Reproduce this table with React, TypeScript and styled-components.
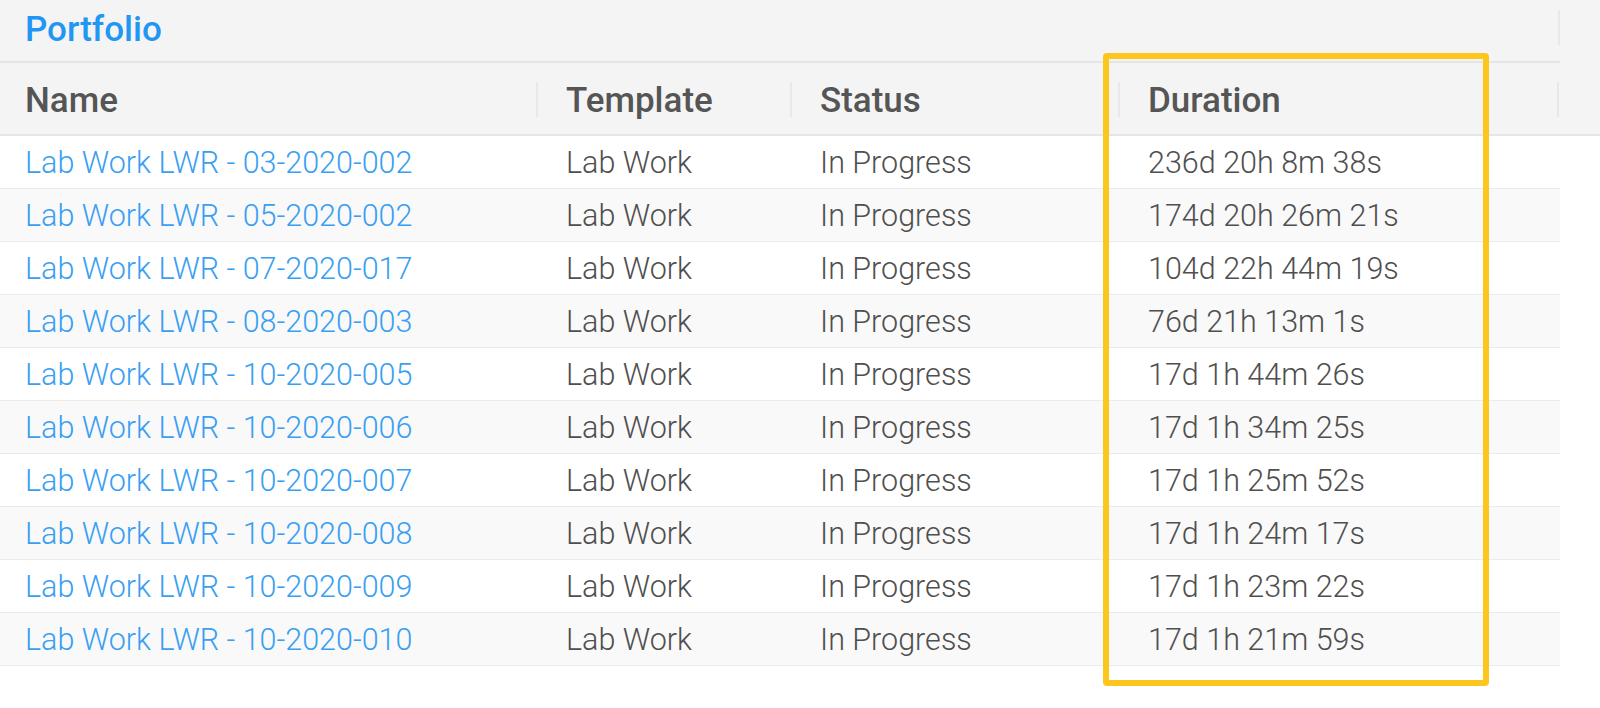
import React from "react";
import styled, { createGlobalStyle } from "styled-components";

const GlobalStyle = createGlobalStyle`
  html, body { margin: 0; padding: 0; background: #ffffff; }
  body { font-family: Roboto, "Noto Sans", Arial, sans-serif; }
`;

const COLS = "538px 254px 328px 439px 1fr";

const Panel = styled.div`
  position: relative;
  width: 1600px;
  height: 708px;
  background: #ffffff;
  overflow: hidden;
`;

const TitleBar = styled.div`
  display: flex;
  background: #f4f4f4;
  height: 63px;
`;

const TitleCell = styled.div`
  flex: 0 0 1560px;
  box-sizing: border-box;
  display: flex;
  align-items: center;
  padding: 0 0 3px 25px;
  border-bottom: 2px solid #e5e5e5;
`;

const Title = styled.h1`
  margin: 0;
  font-size: 35px;
  font-weight: 500;
  color: #2196f3;
`;

const TitleDivider = styled.div`
  width: 2px;
  height: 35px;
  margin-top: 10px;
  margin-left: -2px;
  background: #e8e8e8;
`;

const HeaderRow = styled.div`
  display: grid;
  grid-template-columns: ${COLS};
  height: 73px;
  box-sizing: border-box;
  background: #f4f4f4;
  border-bottom: 2px solid #e6e6e6;
`;

const HeaderCell = styled.div<{ $first?: boolean }>`
  position: relative;
  display: flex;
  align-items: center;
  padding-left: ${(p) => (p.$first ? "25px" : "28px")};
  padding-top: 3px;
  font-size: 35px;
  font-weight: 500;
  color: #555555;
  &::before {
    content: "";
    display: ${(p) => (p.$first ? "none" : "block")};
    position: absolute;
    left: -2px;
    top: 19px;
    width: 2px;
    height: 35px;
    background: #e8e8e8;
  }
`;

const Body = styled.div`
  width: 1560px;
`;

const Row = styled.div<{ $alt: boolean }>`
  display: grid;
  grid-template-columns: 538px 254px 328px 440px;
  height: 53px;
  box-sizing: border-box;
  border-bottom: 1px solid #ebebeb;
  background: ${(p) => (p.$alt ? "#f9f9f9" : "#ffffff")};
`;

const Cell = styled.div<{ $first?: boolean }>`
  display: flex;
  align-items: center;
  padding-left: ${(p) => (p.$first ? "25px" : "28px")};
  font-size: 30.5px;
  font-weight: 300;
  color: #4f4f4f;
  white-space: nowrap;
`;

const NameLink = styled.a`
  color: #3a9ff2;
  text-decoration: none;
`;

const Highlight = styled.div`
  position: absolute;
  left: 1103px;
  top: 53px;
  width: 386px;
  height: 633px;
  box-sizing: border-box;
  border: 6px solid #fdc61f;
  border-radius: 4px;
  pointer-events: none;
`;

const rows = [
  ["03-2020-002", "236d 20h 8m 38s"],
  ["05-2020-002", "174d 20h 26m 21s"],
  ["07-2020-017", "104d 22h 44m 19s"],
  ["08-2020-003", "76d 21h 13m 1s"],
  ["10-2020-005", "17d 1h 44m 26s"],
  ["10-2020-006", "17d 1h 34m 25s"],
  ["10-2020-007", "17d 1h 25m 52s"],
  ["10-2020-008", "17d 1h 24m 17s"],
  ["10-2020-009", "17d 1h 23m 22s"],
  ["10-2020-010", "17d 1h 21m 59s"],
];

export default function App() {
  return (
    <>
      <GlobalStyle />
      <Panel>
        <TitleBar>
          <TitleCell>
            <Title>Portfolio</Title>
          </TitleCell>
          <TitleDivider />
        </TitleBar>
        <HeaderRow>
          <HeaderCell $first>Name</HeaderCell>
          <HeaderCell>Template</HeaderCell>
          <HeaderCell>Status</HeaderCell>
          <HeaderCell>Duration</HeaderCell>
          <HeaderCell />
        </HeaderRow>
        <Body>
          {rows.map(([id, dur], i) => (
            <Row key={id} $alt={i % 2 === 1}>
              <Cell $first>
                <NameLink href="#">Lab Work LWR - {id}</NameLink>
              </Cell>
              <Cell>Lab Work</Cell>
              <Cell>In Progress</Cell>
              <Cell>{dur}</Cell>
            </Row>
          ))}
        </Body>
        <Highlight />
      </Panel>
    </>
  );
}
